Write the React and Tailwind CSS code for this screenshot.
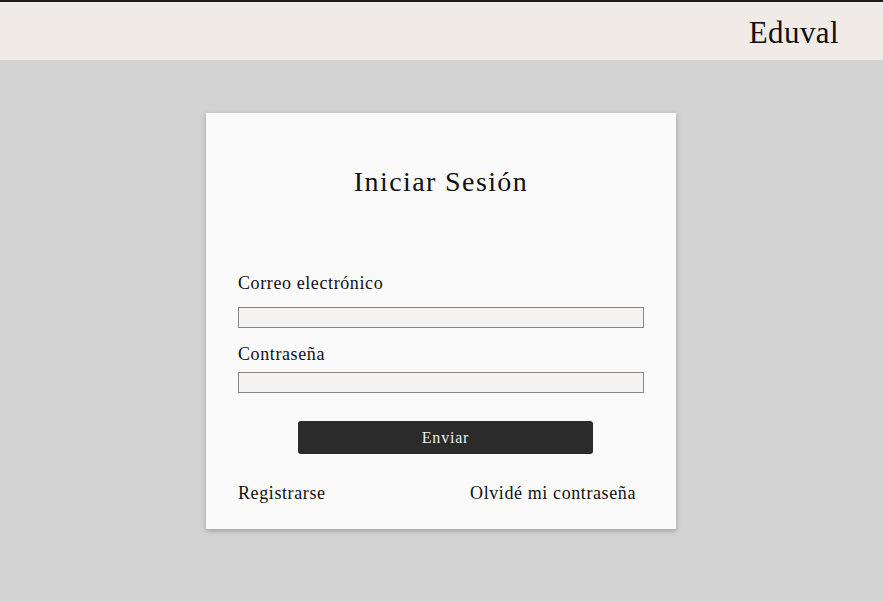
export default function App() {
  return (
    <div className="min-h-[602px] bg-[#d3d3d3] font-['Liberation_Serif',serif] text-[#111]">
      <header className="h-[60px] bg-[#f0ebe7] border-t-2 border-[#1e1c1b] flex items-center justify-end pr-[44px]">
        <span className="text-[31px] leading-none tracking-[0.4px] pt-[2px]">Eduval</span>
      </header>

      <main className="flex justify-center pt-[53px] pr-px">
        <form
          onSubmit={(e) => e.preventDefault()}
          className="w-[470px] h-[416px] bg-[#fafafa] shadow-[0_2px_5px_rgba(0,0,0,0.25)] px-8 pt-[53px] flex flex-col"
        >
          <h1 className="text-[28px] leading-8 text-center tracking-[1.4px]">Iniciar Sesión</h1>

          <label className="mt-[73px] text-[18px] leading-6 tracking-[0.6px]">Correo electrónico</label>
          <input
            type="email"
            className="mt-3 h-[21px] w-full bg-[#f5f3f1] border border-[#8a8684] outline-none"
          />

          <label className="mt-[14px] text-[18px] leading-6 tracking-[0.6px]">Contraseña</label>
          <input
            type="password"
            className="mt-[6px] h-[21px] w-full bg-[#f5f3f1] border border-[#8a8684] outline-none"
          />

          <button className="mt-[28px] ml-[60px] w-[295px] h-[33px] rounded-[3px] bg-[#2b2b2b] text-[#eeeeee] text-[16px] tracking-[0.8px]">
            Enviar
          </button>

          <div className="mt-[27px] flex justify-between text-[18px] leading-6 tracking-[0.6px]">
            <a href="#">Registrarse</a>
            <a href="#" className="pr-2">Olvidé mi contraseña</a>
          </div>
        </form>
      </main>
    </div>
  );
}
